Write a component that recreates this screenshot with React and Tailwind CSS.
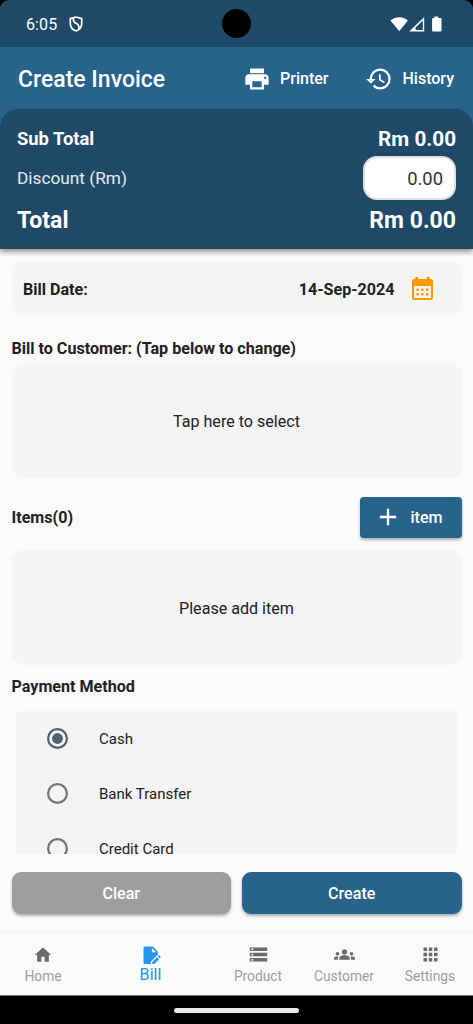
import React from "react";
import { MdPrint, MdHistory, MdAdd, MdHome, MdStorage, MdGroups, MdApps } from "react-icons/md";

function StatusBar() {
  return (
    <div className="bg-black">
      <div className="relative flex h-[47px] items-center justify-between rounded-t-[9px] bg-[#1f4a67] pr-[31px] pl-[26px] text-white">
        <div className="flex items-center gap-[12px]">
          <span className="pt-[2px] text-[16px] leading-[20px] tracking-[0.1px]">6:05</span>
          <svg width="14" height="16" viewBox="0 0 14 16" fill="none" stroke="white" strokeWidth="1.7">
            <path d="M7 1 L12.7 2.6 V7.5 C12.7 11 10.2 13.8 7 15 C3.8 13.8 1.3 11 1.3 7.5 V2.6 Z" strokeLinejoin="round" />
            <path d="M4.4 2.2 C4 5 5 6.4 7.4 7.6 C9.8 8.8 10.3 10.4 9.8 13" />
          </svg>
        </div>
        <span className="absolute top-[9px] left-[222px] h-[29px] w-[29px] rounded-full bg-black" />
        <svg width="52" height="16" viewBox="0 0 52 16" fill="white">
          <path d="M0.5 4.5 C5.2 0 13.3 0 17.9 4.5 L9.2 15.2 Z" />
          <path fillRule="evenodd" d="M34.2 1 V15.4 H19.2 Z M32.8 4.6 L25.6 11.6 V14 H32.8 Z" />
          <path d="M44.3 0.5 h4 v1.4 h2.2 q1 0 1 1 v11.5 q0 1 -1 1 h-7.4 q-1 0 -1 -1 v-11.5 q0 -1 1 -1 h1.2 Z" />
        </svg>
      </div>
    </div>
  );
}

function AppBar() {
  return (
    <header className="flex h-[62px] items-center justify-between bg-[#28638b] px-[18px] pt-[3px] text-white">
      <h1 className="text-[23px] leading-[28px] font-medium">Create Invoice</h1>
      <div className="flex items-center pr-[1px] pb-[2px]">
        <button className="mr-[37px] flex items-center gap-[9px] text-[16px] leading-[20px] font-medium">
          <MdPrint size={28} />
          Printer
        </button>
        <button className="flex items-center gap-[9px] text-[16px] leading-[20px] font-medium">
          <MdHistory size={28} />
          History
        </button>
      </div>
    </header>
  );
}

function Totals() {
  return (
    <div className="bg-[#28638b] shadow-[0_3px_5px_rgba(0,0,0,0.4)]">
      <section className="h-[140px] rounded-t-[18px] bg-[#1f4966] px-[17px] pt-[14px] text-white">
        <div className="flex h-[32px] items-center justify-between font-bold">
          <span className="text-[18.4px]">Sub Total</span>
          <span className="pt-[1px] text-[20.7px]">Rm 0.00</span>
        </div>
        <div className="flex h-[46px] items-center justify-between">
          <span className="pt-[1px] text-[17.25px] text-white/90">Discount (Rm)</span>
          <span className="flex h-[44px] w-[93px] items-center justify-end rounded-[14px] border-2 border-[#dfdfdf] bg-white pt-[1px] pr-[11px] text-[18.4px] text-[#333]">
            0.00
          </span>
        </div>
        <div className="flex h-[40px] items-center justify-between text-[23px] font-bold">
          <span>Total</span>
          <span>Rm 0.00</span>
        </div>
      </section>
    </div>
  );
}

function CalendarIcon() {
  return (
    <svg width="22" height="24" viewBox="0 0 22 24" fill="#ff9800">
      <path
        fillRule="evenodd"
        d="M3.3 0 H6.2 V2 H14.8 V0 H17.7 V2 H19 Q21 2 21 4 V21 Q21 23 19 23 H2 Q0 23 0 21 V4 Q0 2 2 2 H3.3 Z M2 9 V20.3 Q2 21 2.7 21 H18.3 Q19 21 19 20.3 V9 Z"
      />
      <path d="M4.4 11.5h2.4v2.4h-2.4z M9.2 11.5h2.4v2.4h-2.4z M14 11.5h2.4v2.4h-2.4z M4.4 16h2.4v2.4h-2.4z M9.2 16h2.4v2.4h-2.4z M14 16h2.4v2.4h-2.4z" />
    </svg>
  );
}

function BillIcon() {
  return (
    <svg width="18" height="18" viewBox="0 0 18 18" fill="#2196f3">
      <path
        fillRule="evenodd"
        d="M2 0.5 H9.8 L14.8 5.5 V8.7 L7.8 15.4 V18 H2 Q0.5 18 0.5 16.5 V2 Q0.5 0.5 2 0.5 Z M8.9 1.9 V6.3 H13.4 Z"
      />
      <path d="M9.2 18 V15.9 L14 11.2 L16 13.2 L11.3 18 Z" />
      <path d="M14.8 10.4 L15.6 9.6 Q16.1 9.2 16.6 9.6 L17.5 10.5 Q17.9 11 17.5 11.5 L16.7 12.3 Z" />
    </svg>
  );
}

function Placeholder({ children }) {
  return (
    <div className="flex h-[115px] items-center justify-center rounded-[12px] bg-[#f4f4f4] pt-[3px] text-[16.1px]">
      {children}
    </div>
  );
}

const methods = ["Cash", "Bank Transfer", "Credit Card"];

function PaymentMethods() {
  return (
    <div className="mr-[4.5px] ml-[4.5px] mt-[14px] h-[143px] overflow-hidden rounded-t-[4px] bg-[#f4f4f4]">
      {methods.map((name, i) => (
        <label key={name} className="flex h-[55px] items-center pl-[31px] text-[15px]">
          {i === 0 ? (
            <svg className="mr-[31px]" width="21" height="21" viewBox="0 0 21 21">
              <circle cx="10.5" cy="10.5" r="9.4" fill="none" stroke="#4f6273" strokeWidth="2.2" />
              <circle cx="10.5" cy="10.5" r="5.4" fill="#4f6273" />
            </svg>
          ) : (
            <svg className="mr-[31px]" width="21" height="21" viewBox="0 0 21 21">
              <circle cx="10.5" cy="10.5" r="9.4" fill="none" stroke="#757575" strokeWidth="2.2" />
            </svg>
          )}
          <span className="pt-[1px]">{name}</span>
        </label>
      ))}
    </div>
  );
}

function NavItem({ icon: Icon, label, size }) {
  return (
    <div className="flex w-[86px] flex-col items-center pt-[11px]">
      <div className="flex h-[23px] items-center text-[#6b6b6b]">
        <Icon size={size} />
      </div>
      <span className="mt-[1px] text-[13.8px] leading-[18px] text-[#9e9e9e]">{label}</span>
    </div>
  );
}

function BottomNav() {
  return (
    <nav className="flex h-[65px] border-t border-b border-t-[#f1f1f1] border-b-[#777777] bg-[#fafafa]">
      <NavItem icon={MdHome} label="Home" size={20} />
      <div className="flex w-[129px] flex-col items-center pt-[11px] text-[#2196f3]">
        <div className="flex h-[23px] items-center pl-[2px]">
          <BillIcon />
        </div>
        <span className="text-[16.1px] leading-[18px]">Bill</span>
      </div>
      <NavItem icon={MdStorage} label="Product" size={21} />
      <NavItem icon={MdGroups} label="Customer" size={21} />
      <NavItem icon={MdApps} label="Settings" size={21} />
    </nav>
  );
}

export default function App() {
  return (
    <div className="flex h-[1024px] w-[473px] flex-col overflow-hidden bg-[#fafafa] font-[Roboto,sans-serif] text-[#212121]">
      <StatusBar />
      <AppBar />
      <Totals />
      <main className="flex h-[682px] flex-col px-[11.5px] pt-[12px]">
        <div className="flex h-[55px] items-center rounded-[12px] bg-[#f4f4f4] pr-[28px] pl-[11.5px] text-[16.1px] font-bold">
          <span className="flex-1 pt-[3px]">Bill Date:</span>
          <span className="mr-[17px] pt-[3px]">14-Sep-2024</span>
          <CalendarIcon />
        </div>
        <h2 className="mt-[23px] mb-[4px] text-[16.1px] leading-[20px] font-bold">Bill to Customer: (Tap below to change)</h2>
        <Placeholder>Tap here to select</Placeholder>
        <div className="flex h-[72px] items-center justify-between">
          <h2 className="pt-[8px] text-[16.1px] leading-[20px] font-bold">Items(0)</h2>
          <button className="mt-[6px] flex h-[41px] w-[101.5px] items-center gap-[9px] rounded-[4px] bg-[#28638b] pl-[13.5px] text-[16.1px] font-medium text-white shadow-[0_2px_3px_rgba(0,0,0,0.3)]">
            <MdAdd size={28} />
            <span className="pt-[2px]">item</span>
          </button>
        </div>
        <Placeholder>Please add item</Placeholder>
        <h2 className="mt-[12px] text-[16.1px] leading-[20px] font-bold">Payment Method</h2>
        <PaymentMethods />
        <div className="mt-[18px] flex gap-[11px] text-[16.1px] font-medium text-white">
          <button className="h-[42px] flex-1 rounded-[9px] bg-[#9e9e9e] pt-[2px] shadow-[0_2px_3px_rgba(0,0,0,0.3)]">Clear</button>
          <button className="h-[42px] flex-1 rounded-[9px] bg-[#28638b] pt-[2px] shadow-[0_2px_3px_rgba(0,0,0,0.3)]">Create</button>
        </div>
      </main>
      <BottomNav />
      <footer className="flex h-[28px] justify-center bg-black pt-[12px]">
        <span className="h-[5px] w-[125px] rounded-full bg-[#e8e8e8]" />
      </footer>
    </div>
  );
}
